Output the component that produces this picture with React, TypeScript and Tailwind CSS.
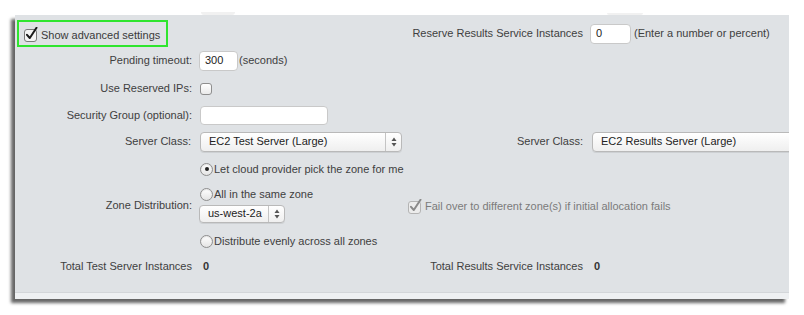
import React from "react";

const font = { fontFamily: '"Liberation Sans", Arial, sans-serif' };

function Arrows() {
  return (
    <svg width="6" height="10" viewBox="0 0 6 10">
      <path d="M3 0.5 L5.5 4 L0.5 4 Z" fill="#555" />
      <path d="M3 9.5 L5.5 6 L0.5 6 Z" fill="#555" />
    </svg>
  );
}

function Select({ value, className, arrows = true }: { value: string; className: string; arrows?: boolean }) {
  return (
    <div
      className={`flex items-stretch shrink-0 rounded-[4px] border border-[#b9b9b9] bg-gradient-to-b from-white to-[#efefef] text-[11px] text-[#222] shadow-[0_1px_0_rgba(0,0,0,0.08)] ${className}`}
    >
      <div className="flex-1 flex items-center pl-2 whitespace-nowrap overflow-hidden">{value}</div>
      {arrows && (
        <div className="w-[16px] border-l border-[#c4c4c4] flex items-center justify-center">
          <Arrows />
        </div>
      )}
    </div>
  );
}

function TextInput({ value, className }: { value?: string; className: string }) {
  return (
    <div
      className={`shrink-0 rounded-[4px] border border-[#c9c9c9] bg-white flex items-center pl-[5px] text-[11px] text-[#222] ${className}`}
    >
      {value}
    </div>
  );
}

function Radio({ on }: { on?: boolean }) {
  return (
    <span className="w-[13px] h-[13px] shrink-0 rounded-full border border-[#8e8e8e] bg-gradient-to-b from-white to-[#e4e4e4] flex items-center justify-center shadow-[inset_0_1px_1px_rgba(0,0,0,0.1)]">
      {on && <span className="w-[4px] h-[4px] rounded-full bg-[#222]" />}
    </span>
  );
}

function CheckMark({ color, box, border }: { color: string; box: string; border: string }) {
  return (
    <svg width="14" height="15" viewBox="0 0 14 15" className="shrink-0">
      <rect x="0.5" y="2.5" width="12" height="12" rx="2.5" fill={box} stroke={border} />
      <path d="M3 7.8 L5.8 11 L12.5 0.8" fill="none" stroke={color} strokeWidth="2" strokeLinecap="round" strokeLinejoin="round" />
    </svg>
  );
}

function Label({ children, w }: { children: React.ReactNode; w: string }) {
  return <div className={`${w} shrink-0 text-right whitespace-nowrap`}>{children}</div>;
}

export default function App() {
  return (
    <div className="w-[804px] h-[315px] bg-white overflow-hidden text-[11px] text-[#404040]" style={font}>
      <div className="h-[15px] flex items-end">
        <div className="ml-[201px] w-[34px] h-[3px] rounded-b-[6px] bg-[#f1f1f1]" />
        <div className="ml-[372px] w-[36px] h-[2px] rounded-b-[6px] bg-[#f1f1f1]" />
      </div>

      <div className="ml-[15px] w-[774px] bg-[#dfe2e5] overflow-hidden shadow-[-4px_4px_3px_rgba(0,0,0,0.6)]">
        {/* row: show advanced / reserve results */}
        <div className="flex items-center pt-[5px] h-[32px]">
          <div className="ml-[2px] w-[151px] h-[27px] border-2 border-[#2fe52f] flex items-center pl-[5px] pt-[2px] gap-[3px]">
            <CheckMark color="#1a1a1a" box="#f4f4f4" border="#7a7a7a" />
            <span className="text-[11px] text-[#3a3a3a] mt-[2px]">Show advanced settings</span>
          </div>
          <Label w="w-[415px]">Reserve Results Service Instances</Label>
          <TextInput value="0" className="ml-[7px] w-[41px] h-[20px]" />
          <span className="ml-[3px] whitespace-nowrap">(Enter a number or percent)</span>
        </div>

        {/* pending timeout */}
        <div className="flex items-center h-[27px]">
          <Label w="w-[177px]">Pending timeout:</Label>
          <TextInput value="300" className="ml-[7px] w-[39px] h-[20px]" />
          <span className="ml-[1px]">(seconds)</span>
        </div>

        {/* reserved ips */}
        <div className="flex items-center h-[29px]">
          <Label w="w-[177px]">Use Reserved IPs:</Label>
          <span className="ml-[8px] w-[12px] h-[12px] rounded-[3px] border border-[#8e8e8e] bg-gradient-to-b from-white to-[#eaeaea]" />
        </div>

        {/* security group */}
        <div className="flex items-center h-[24px]">
          <Label w="w-[177px]">Security Group (optional):</Label>
          <TextInput className="ml-[8px] w-[128px] h-[19px]" />
        </div>

        {/* server class */}
        <div className="flex items-center h-[29px]">
          <Label w="w-[176px]">Server Class:</Label>
          <Select value="EC2 Test Server (Large)" className="ml-[9px] w-[202px] h-[20px]" />
          <Label w="w-[181px]">Server Class:</Label>
          <Select value="EC2 Results Server (Large)" className="ml-[9px] w-[230px] h-[20px]" arrows={false} />
        </div>

        {/* zone distribution */}
        <div className="flex items-center h-[98px]">
          <Label w="w-[177px]">Zone Distribution:</Label>
          <div className="ml-[8px] w-[208px] flex flex-col pt-[7px] pb-[7px]">
            <div className="flex items-center h-[13px]">
              <Radio on />
              <span className="ml-[1px]">Let cloud provider pick the zone for me</span>
            </div>
            <div className="flex items-center h-[13px] mt-[12px]">
              <Radio />
              <span className="ml-[1px]">All in the same zone</span>
            </div>
            <Select value="us-west-2a" className="-ml-[1px] mt-[4px] w-[86px] h-[18px]" />
            <div className="flex items-center h-[13px] mt-[12px]">
              <Radio />
              <span className="ml-[1px]">Distribute evenly across all zones</span>
            </div>
          </div>
          <div className="flex items-end gap-[3px] mt-[2px] text-[#7b7b7b]">
            <CheckMark color="#8a8a8a" box="#ececec" border="#b4b4b4" />
            <span className="whitespace-nowrap">Fail over to different zone(s) if initial allocation fails</span>
          </div>
        </div>

        {/* totals */}
        <div className="flex items-center h-[24px]">
          <Label w="w-[177px]">Total Test Server Instances</Label>
          <span className="ml-[11px] w-[204px] font-bold text-[#333]">0</span>
          <Label w="w-[176px]">Total Results Service Instances</Label>
          <span className="ml-[11px] font-bold text-[#333]">0</span>
        </div>

        <div className="h-[14px]" />
        <div className="h-[7px] border-t border-[#d3d6d9] bg-[#eef0f2]" />
      </div>
    </div>
  );
}
